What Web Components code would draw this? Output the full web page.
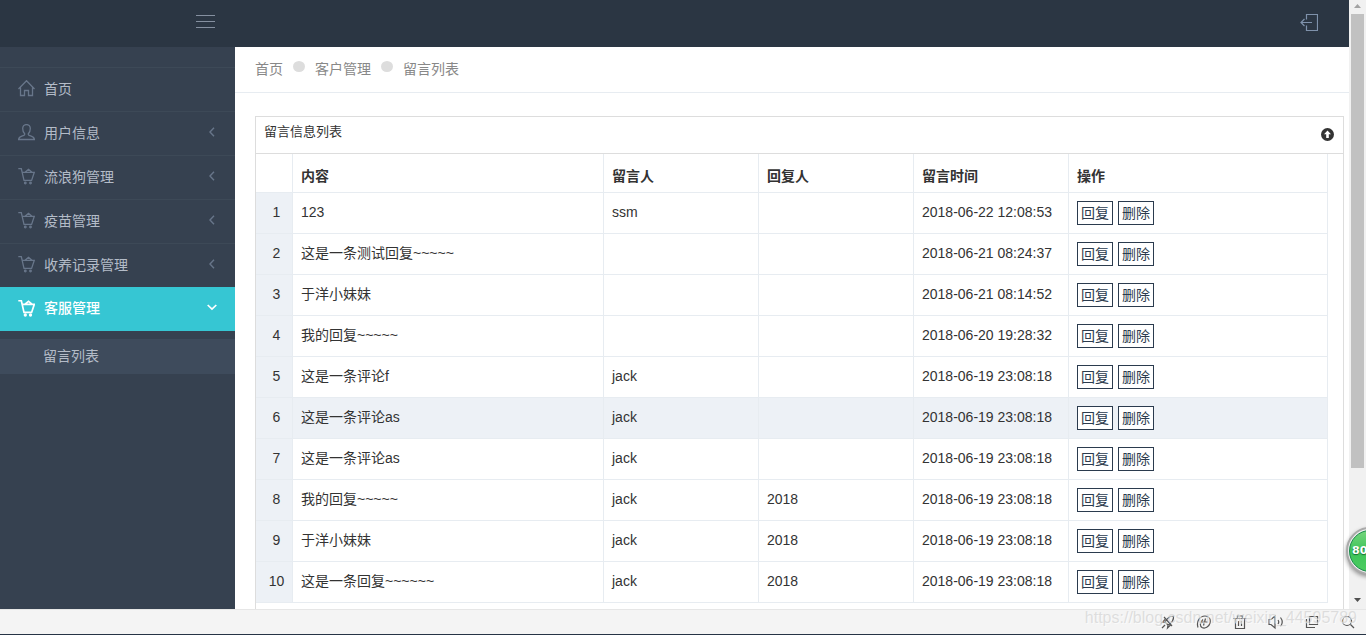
<!DOCTYPE html>
<html lang="zh-CN">
<head>
<meta charset="utf-8">
<title>留言列表</title>
<style>
  body { margin: 0; font-family: "Liberation Sans", "Noto Sans CJK SC", sans-serif; font-size: 14px; line-height: 20px; color: #333; }
</style>
</head>
<body>
<app-shell>
  <top-bar slot="top"></top-bar>
  <side-nav slot="side">
    <nav-item icon="home" label="首页"></nav-item>
    <nav-item icon="user" label="用户信息" more></nav-item>
    <nav-item icon="basket" label="流浪狗管理" more></nav-item>
    <nav-item icon="basket" label="疫苗管理" more></nav-item>
    <nav-item icon="basket" label="收养记录管理" more></nav-item>
    <nav-item icon="basket" label="客服管理" active><nav-sub>留言列表</nav-sub></nav-item>
  </side-nav>
  <crumb-bar slot="main"></crumb-bar>
  <grid-panel slot="main" heading="留言信息列表"><message-table></message-table></grid-panel>
  <scroll-track slot="scroll"></scroll-track>
  <speed-ball slot="float"></speed-ball>
  <status-bar slot="status"></status-bar>
</app-shell>
<script>
const define = (name, html, setup) => customElements.define(name, class extends HTMLElement {
  constructor() {
    super();
    this.attachShadow({ mode: 'open' }).innerHTML = '<style>*,:host{box-sizing:border-box}a{color:inherit;text-decoration:none}button{font:inherit;color:inherit;background:none;border:0;padding:0;cursor:pointer}svg{display:block}</style>' + html;
  }
  connectedCallback() { if (setup) setup(this, this.shadowRoot); }
});

define('app-shell', `
<style>
  :host { display: flex; flex-direction: column; height: 100vh; overflow: hidden; }
  .view { position: relative; flex: 1; min-height: 0; display: grid; grid-template-columns: minmax(0, 1fr) 17px; }
  .page { display: grid; grid-template: 47px minmax(0, 1fr) / 235px minmax(0, 1fr); min-height: 0; overflow: hidden; background: #fff; }
  header { grid-column: 1 / 3; }
  header, aside { display: grid; }
  main { min-height: 0; overflow: hidden; }
</style>
<div class="view">
  <div class="page">
    <header><slot name="top"></slot></header>
    <aside><slot name="side"></slot></aside>
    <main><slot name="main"></slot></main>
  </div>
  <slot name="scroll"></slot>
  <slot name="float"></slot>
</div>
<slot name="status"></slot>`);

define('top-bar', `
<style>
  :host { display: flex; justify-content: space-between; background: #2b3643; padding: 13px 31px 0 196px; }
  button { display: block; height: 19px; }
</style>
<button aria-label="菜单"><svg width="19" height="19" viewBox="0 0 19 19" stroke="#8590a0" fill="none"><path d="M0 2.5h19M0 8.5h19M0 14.5h19"/></svg></button>
<button aria-label="退出"><svg width="18" height="19" viewBox="0 0 18 19" stroke="#7f92ab" stroke-width="1.200" fill="none"><path d="M6.500 6.500V1.500H17.500V17.500H6.500V12.500M12 9.500H1M4.500 6L1 9.500L4.500 13"/></svg></button>`);

define('side-nav', `
<style>
  :host { display: block; background: #364150; padding-top: 20px; color: #b4bcc8; }
</style>
<nav><slot></slot></nav>`);

const ICONS = {
  home: '<path d="M.5 9L8.500 .7L16.500 9M2.500 7.500V15.500H6.500V10.500H10.500V15.500H14.500V7.500"/>',
  user: '<path d="M8.500 .6C6 .6 4.700 2.200 4.700 4.600C4.700 7 5.500 8.500 6.500 9.500C7 10.100 6.600 11 5.800 11.400C3.500 12.400 .8 12.700 .6 15.500H16.400C16.200 12.700 13.500 12.400 11.200 11.400C10.400 11 10 10.100 10.500 9.500C11.500 8.500 12.300 7 12.300 4.600C12.300 2.200 11 .6 8.500 .6Z"/>',
  basket: '<path d="M.3 .6H3.300L6 12.400H13.600L16.300 4.300H4.200M7 4.200L10.500 1.300L14 4.200"/><circle cx="7.300" cy="15" r=".8"/><circle cx="12.500" cy="15" r=".8"/>'
};
define('nav-item', `
<style>
  :host { display: block; }
  a { display: flex; align-items: center; gap: 9px; height: 44px; padding: 0 18px 2px; border-top: 1px solid #3d4957; }
  .icon { stroke: #68768a; fill: none; stroke-width: 1.300; }
  .label { flex: 1; }
  .arrow { stroke: #68768a; fill: none; stroke-width: 1.400; margin-bottom: 2px; }
  :host([active]) a { background: #36c6d3; color: #fff; border-top: 0; font-weight: 500; }
  :host([active]) .icon, :host([active]) .arrow { stroke: #fff; stroke-width: 1.700; }
</style>
<a href="#"><svg class="icon" width="17" height="17" viewBox="0 0 17 17"></svg><span class="label"></span><svg class="arrow" width="10" height="10" viewBox="0 0 10 10"></svg></a>
<slot></slot>`, (el, root) => {
  root.querySelector('.icon').innerHTML = ICONS[el.getAttribute('icon')];
  root.querySelector('.label').textContent = el.getAttribute('label');
  const arrow = root.querySelector('.arrow');
  if (el.hasAttribute('active')) arrow.innerHTML = '<path d="M.7 3L5 7L9.300 3"/>';
  else if (el.hasAttribute('more')) arrow.innerHTML = '<path d="M7 .8L3 5L7 9.200"/>';
});

define('nav-sub', `
<style>
  :host { display: block; padding: 8px 0; }
  a { display: block; background: #3e4b5c; padding: 7px 0 8px 43px; }
</style>
<a href="#"><slot></slot></a>`);

define('crumb-bar', `
<style>
  :host { display: block; border-bottom: 1px solid #e7ecf1; }
  nav { display: flex; gap: 10px; padding: 12px 20px 13px; color: #888; }
  i { width: 12px; height: 11px; margin-top: 2px; border-radius: 50%; background: #ddd; }
</style>
<nav aria-label="位置"><a href="#">首页</a><i></i><a href="#">客户管理</a><i></i><span>留言列表</span></nav>`);

define('grid-panel', `
<style>
  :host { display: block; margin: 23px 5px 0 20px; border: 1px solid #ddd; }
  header { display: flex; justify-content: space-between; padding: 5px 9px 11px 8px; border-bottom: 1px solid #ddd; }
  h2 { margin: 0; font-size: 13px; font-weight: 400; line-height: 20px; }
  button { height: 13px; margin-top: 6px; }
  .body { padding: 0 15px 20px 0; }
</style>
<header><h2></h2><button aria-label="收起"><svg width="13" height="13" viewBox="0 0 13 13"><circle cx="6.500" cy="6.500" r="6.500" fill="#333"/><path fill="#fff" d="M6.500 2.500L10 6.300H7.800V10H5.200V6.300H3Z"/></svg></button></header>
<div class="body"><slot></slot></div>`, (el, root) => {
  root.querySelector('h2').textContent = el.getAttribute('heading');
});

const ROWS = [
  ['123', 'ssm', '', '2018-06-22 12:08:53'],
  ['这是一条测试回复~~~~~', '', '', '2018-06-21 08:24:37'],
  ['于洋小妹妹', '', '', '2018-06-21 08:14:52'],
  ['我的回复~~~~~', '', '', '2018-06-20 19:28:32'],
  ['这是一条评论f', 'jack', '', '2018-06-19 23:08:18'],
  ['这是一条评论as', 'jack', '', '2018-06-19 23:08:18'],
  ['这是一条评论as', 'jack', '', '2018-06-19 23:08:18'],
  ['我的回复~~~~~', 'jack', '2018', '2018-06-19 23:08:18'],
  ['于洋小妹妹', 'jack', '2018', '2018-06-19 23:08:18'],
  ['这是一条回复~~~~~~', 'jack', '2018', '2018-06-19 23:08:18']
];
define('message-table', `
<style>
  :host { display: block; }
  table { width: 100%; table-layout: fixed; border-collapse: separate; border-spacing: 0; }
  .n { width: 37px; } .p { width: 155px; } .o { width: 259px; }
  th, td { padding: 0 8px; text-align: left; border: solid #e7ecf1; border-width: 0 1px 1px 0; white-space: nowrap; }
  th { height: 39px; padding-top: 5px; }
  td { height: 41px; padding-bottom: 2px; }
  td:first-child { background: #edf1f6; text-align: center; padding: 0 4px 2px 9px; }
  tr.hover td { background: #edf1f6; }
  td:last-child { padding: 0 8px; }
  .ops { display: flex; gap: 5px; }
  button { border: 1px solid #2b3b4e; padding: 1px 3px; color: #2b3b4e; background: #fff; }
</style>
<table>
  <colgroup><col class="n"><col><col class="p"><col class="p"><col class="p"><col class="o"></colgroup>
  <thead><tr><th></th><th>内容</th><th>留言人</th><th>回复人</th><th>留言时间</th><th>操作</th></tr></thead>
  <tbody></tbody>
</table>`, (el, root) => {
  root.querySelector('tbody').innerHTML = ROWS.map((r, i) =>
    '<tr' + (i === 5 ? ' class="hover"' : '') + '><td>' + (i + 1) + '</td>' + r.map(t => '<td>' + t + '</td>').join('') +
    '<td><div class="ops"><button>回复</button><button>删除</button></div></td></tr>').join('');
});

define('scroll-track', `
<style>
  :host { display: flex; flex-direction: column; align-items: center; background: #f1f1f1; padding: 4px 0 7px; gap: 6px; }
  .thumb { width: 13px; flex: 0 0 76%; margin-bottom: auto; background: #c1c1c1; }
</style>
<svg width="7" height="4" viewBox="0 0 7 4"><path d="M0 4L3.500 0L7 4Z" fill="#a3a3a3"/></svg>
<div class="thumb"></div>
<svg width="7" height="4" viewBox="0 0 7 4"><path d="M0 0L3.500 4L7 0Z" fill="#505050"/></svg>`);

define('speed-ball', `
<style>
  :host { position: absolute; right: -28px; bottom: 34px; width: 48px; height: 48px; border-radius: 50%; border: 2px solid #aaa; background: #eee; padding: 1px; box-shadow: 0 2px 4px rgba(0,0,0,.4); }
  div { height: 42px; border-radius: 50%; border: 1px solid #178a4a; background: linear-gradient(#75d57c, #3ec45a 50%, #4bcc60); color: #fff; font-size: 11px; font-weight: 700; line-height: 40px; padding-left: 2px; font-family: "DejaVu Sans", sans-serif; text-shadow: 0 1px 1px #176b35; }
</style>
<div>80</div>`);

define('status-bar', `
<style>
  :host { display: block; position: relative; height: 26px; background: #f4f4f4; border-top: 1px solid #e6e6e6; border-bottom: 1px solid #263445; }
  .tools { display: flex; justify-content: flex-end; gap: 20px; padding: 4px 10px 0 0; }
  button { width: 16px; height: 16px; }
  svg { fill: none; stroke: #555; stroke-width: 1.200; }
  .mark { position: absolute; right: 9px; top: -2px; font-size: 16px; line-height: 20px; color: rgba(205,205,205,.6); text-shadow: 1px 1px 0 rgba(255,255,255,.6); white-space: nowrap; pointer-events: none; }
</style>
<div class="tools">
  <button aria-label="加速"><svg width="16" height="16" viewBox="0 0 16 16"><path d="M13.500 2C10 2 7 4.500 5 8L8 11C11.500 9 14 6 13.500 2ZM5 8L2 8.500L5 5.500M8 11L7.500 14L10.500 11M5 11L2 14M4 3L12 12"/></svg></button>
  <button aria-label="下载"><svg width="16" height="16" viewBox="0 0 16 16"><path d="M2 13.500C0 7 4 2 9 2C13 2 15 5 14 9C13 13 9 15 6 13.500C3.500 12 4 8 7 5.500M5.500 8H11.500M9.500 4.500L7.500 11.500"/></svg></button>
  <button aria-label="清理"><svg width="16" height="16" viewBox="0 0 16 16"><path d="M1.500 4.500H14.500M5.500 4V2H10.500V4M3.500 4.500V14.500H12.500V4.500M6.500 7V12M9.500 7V12"/></svg></button>
  <button aria-label="声音"><svg width="16" height="16" viewBox="0 0 16 16"><path d="M1 5.500H3L7 2V14L3 10.500H1ZM10 6Q11.500 8 10 10M12.500 3.500Q16 8 12.500 12.500"/></svg></button>
  <button aria-label="窗口"><svg width="16" height="16" viewBox="0 0 16 16"><path d="M5.500 2.500H13.500V10.500H5.500ZM2.500 5V13.500H11"/></svg></button>
  <button aria-label="缩放"><svg width="16" height="16" viewBox="0 0 16 16"><circle cx="7" cy="7" r="4.500"/><path d="M10.500 10.500L14 14"/></svg></button>
</div>
<div class="mark">https://blog.csdn.net/weixin_44595789</div>`);
</script>
</body>
</html>
